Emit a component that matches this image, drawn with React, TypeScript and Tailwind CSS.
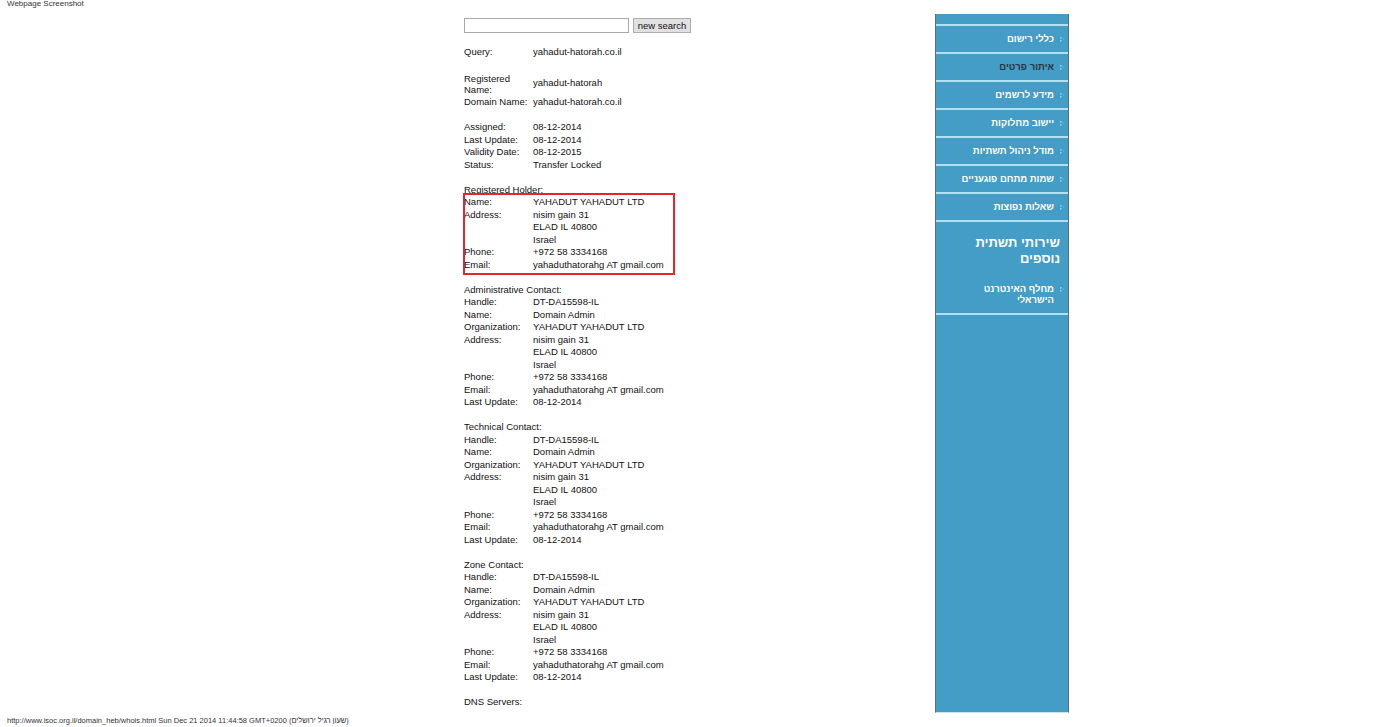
import React from 'react'

type Row = { l?: string; v?: string; h?: string; tall?: boolean }

const contact = (title: string): Row[] => [
  { h: title },
  { l: 'Handle:', v: 'DT-DA15598-IL' },
  { l: 'Name:', v: 'Domain Admin' },
  { l: 'Organization:', v: 'YAHADUT YAHADUT LTD' },
  { l: 'Address:', v: 'nisim gain 31' },
  { v: 'ELAD IL 40800' },
  { v: 'Israel' },
  { l: 'Phone:', v: '+972 58 3334168' },
  { l: 'Email:', v: 'yahaduthatorahg AT gmail.com' },
  { l: 'Last Update:', v: '08-12-2014' },
  {},
]

const top: Row[] = [
  { l: 'Query:', v: 'yahadut-hatorah.co.il' },
  {},
  { l: 'Registered Name:', v: 'yahadut-hatorah', tall: true },
  { l: 'Domain Name:', v: 'yahadut-hatorah.co.il' },
  {},
  { l: 'Assigned:', v: '08-12-2014' },
  { l: 'Last Update:', v: '08-12-2014' },
  { l: 'Validity Date:', v: '08-12-2015' },
  { l: 'Status:', v: 'Transfer Locked' },
  {},
]

const holder: Row[] = [
  { h: 'Registered Holder:' },
  { l: 'Name:', v: 'YAHADUT YAHADUT LTD' },
  { l: 'Address:', v: 'nisim gain 31' },
  { v: 'ELAD IL 40800' },
  { v: 'Israel' },
  { l: 'Phone:', v: '+972 58 3334168' },
  { l: 'Email:', v: 'yahaduthatorahg AT gmail.com' },
  {},
]

const rest: Row[] = [
  ...contact('Administrative Contact:'),
  ...contact('Technical Contact:'),
  ...contact('Zone Contact:'),
  { h: 'DNS Servers:' },
]

const menu = [
  { t: 'כללי רישום' },
  { t: 'איתור פרטים', dark: true },
  { t: 'מידע לרשמים' },
  { t: 'יישוב מחלוקות' },
  { t: 'מודל ניהול תשתיות' },
  { t: 'שמות מתחם פוגעניים' },
  { t: 'שאלות נפוצות' },
]

function Rows({ rows }: { rows: Row[] }) {
  return (
    <>
      {rows.map((r, i) => {
        if (r.h) return <div key={i} className="h-[12.5px] whitespace-nowrap">{r.h}</div>
        if (!r.l && !r.v) return <div key={i} className="h-[12.5px]" />
        return (
          <div key={i} className={`flex items-center ${r.tall ? 'h-[25px]' : 'h-[12.5px]'}`}>
            <div className={`w-[69px] shrink-0 ${r.tall ? 'leading-[11px]' : ''}`}>{r.l}</div>
            <div className="whitespace-nowrap">{r.v}</div>
          </div>
        )
      })}
    </>
  )
}

function Bullet() {
  return (
    <svg width="4" height="6" viewBox="0 0 4 6" className="shrink-0">
      <rect x="0" y="1" width="1.5" height="1.5" fill="#8fd3ee" />
      <rect x="0" y="4" width="1.5" height="1.5" fill="#8fd3ee" />
      <rect x="2.5" y="2.5" width="1" height="1" fill="#6fc0e2" />
    </svg>
  )
}

export default function App() {
  return (
    <div
      className="h-[727px] overflow-hidden bg-white flex flex-col text-[#111]"
      style={{ fontFamily: '"Liberation Sans", Arial, "DejaVu Sans", sans-serif' }}
    >
      <div className="h-[14px] shrink-0 pl-[7px] text-[8px] leading-[7px] text-[#333]">Webpage Screenshot</div>

      <div className="flex flex-1 min-h-0 overflow-hidden">
        <div className="ml-[464px] w-[471px] shrink-0 text-[9.5px] leading-[12.5px]">
          <div className="flex items-center mt-[4px] h-[15px]">
            <input className="w-[165px] h-[15px] border border-[#a9a9a9] bg-white outline-none" />
            <button className="ml-[4px] w-[58px] h-[15px] border border-[#adadad] bg-[#e1e1e1] text-[9.5px] leading-[13px] text-[#111]">
              new search
            </button>
          </div>
          <div className="mt-[13px]">
            <Rows rows={top} />
            <div className="relative">
              <Rows rows={holder} />
              <div className="absolute left-[-1px] top-[9px] w-[212px] h-[82px] border-2 border-[#e4262b]" />
            </div>
            <Rows rows={rest} />
          </div>
        </div>

        <div className="w-[134px] h-[699px] shrink-0 bg-[#439dc6] border-x border-[#5b6b80] border-b border-b-[#c9e6f2] pt-[10px]" dir="rtl">
          {menu.map((m, i) => (
            <div key={i} className="border-t-2 border-[#b4dff0] h-[28px] flex items-center gap-[6px] pr-[4px]">
              <Bullet />
              <span className={`text-[9.5px] font-bold ${m.dark ? 'text-[#2b3440]' : 'text-white'}`}>{m.t}</span>
            </div>
          ))}
          <div className="border-t-2 border-[#b4dff0] pt-[13px] pr-[8px] pb-[8px]">
            <div className="text-[13px] leading-[16px] font-bold text-white">שירותי תשתית<br />נוספים</div>
            <div className="flex items-start gap-[6px] mt-[16px] -mr-[4px] pl-[20px]">
              <div className="pt-[3px]"><Bullet /></div>
              <span className="text-[9.5px] leading-[11px] font-bold text-white">מחלף האינטרנט הישראלי</span>
            </div>
          </div>
          <div className="border-t-2 border-[#b4dff0]" />
        </div>
      </div>

      <div className="h-[11px] shrink-0 pl-[7px] text-[7.5px] leading-[9px] text-[#333] whitespace-nowrap">
        http://www.isoc.org.il/domain_heb/whois.html Sun Dec 21 2014 11:44:58 GMT+0200 (שעון רגיל ירושלים)
      </div>
    </div>
  )
}
